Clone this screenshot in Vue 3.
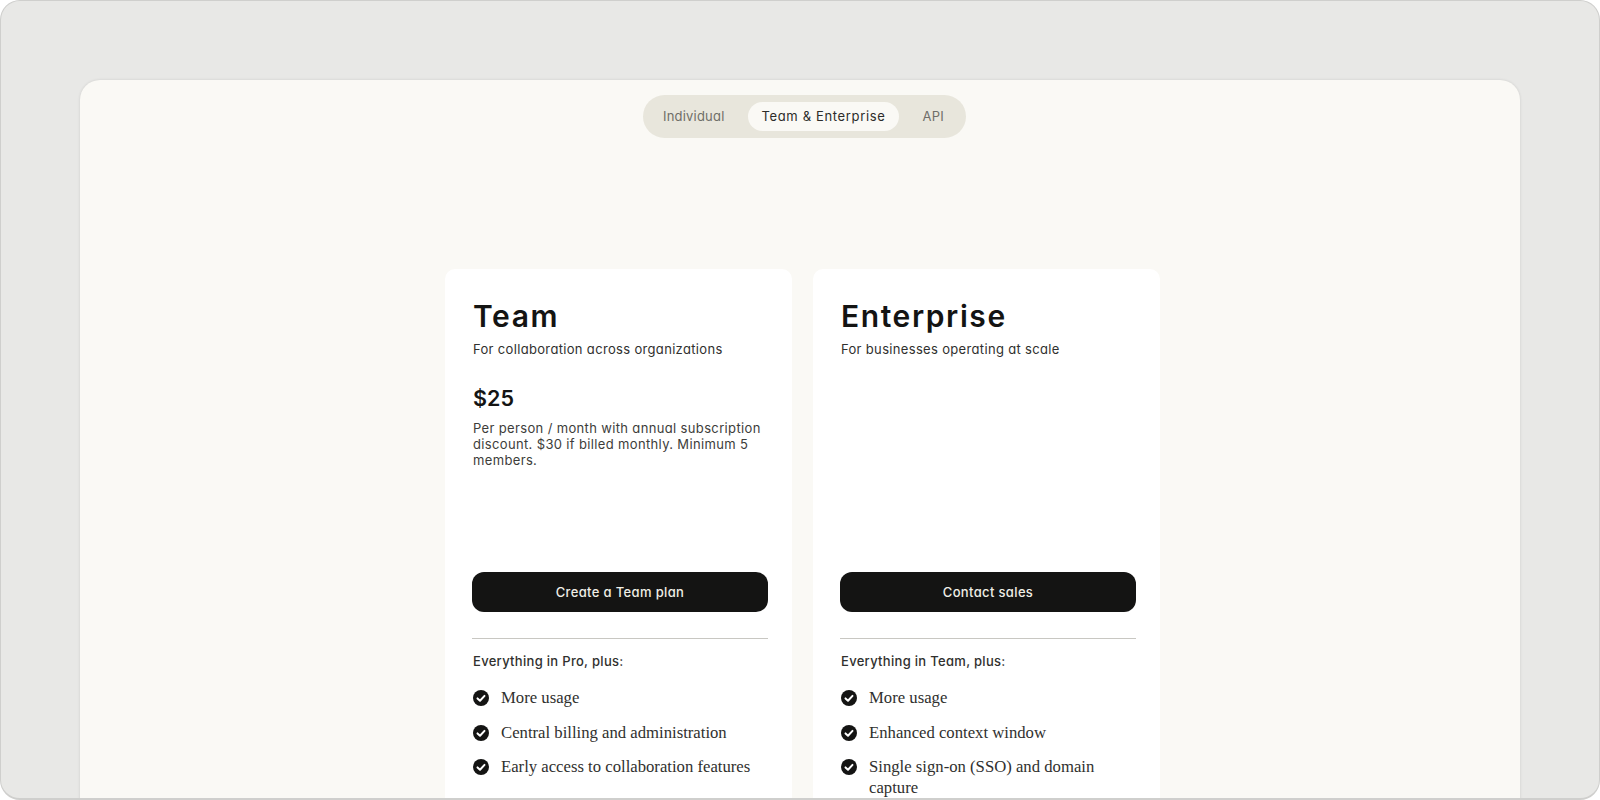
<script setup>
const tabs = [
  { label: 'Individual', active: false },
  { label: 'Team & Enterprise', active: true },
  { label: 'API', active: false },
]
const plans = [
  {
    name: 'Team',
    tagline: 'For collaboration across organizations',
    price: '$25',
    note: 'Per person / month with annual subscription discount. $30 if billed monthly. Minimum 5 members.',
    cta: 'Create a Team plan',
    lead: 'Everything in Pro, plus:',
    features: ['More usage', 'Central billing and administration', 'Early access to collaboration features'],
  },
  {
    name: 'Enterprise',
    tagline: 'For businesses operating at scale',
    price: '',
    note: '',
    cta: 'Contact sales',
    lead: 'Everything in Team, plus:',
    features: ['More usage', 'Enhanced context window', 'Single sign-on (SSO) and domain capture'],
  },
]
</script>

<template>
  <div class="frame">
    <main class="panel">
      <nav class="tabs">
        <span v-for="t in tabs" :key="t.label" class="tab" :class="{ active: t.active }">{{ t.label }}</span>
      </nav>
      <section class="plans">
        <article v-for="p in plans" :key="p.name" class="card">
          <h2 class="name">{{ p.name }}</h2>
          <p class="tagline">{{ p.tagline }}</p>
          <div class="pricing">
            <template v-if="p.price">
              <div class="price">{{ p.price }}</div>
              <p class="note">{{ p.note }}</p>
            </template>
          </div>
          <button class="cta">{{ p.cta }}</button>
          <hr class="rule" />
          <p class="lead">{{ p.lead }}</p>
          <ul class="features">
            <li v-for="f in p.features" :key="f" class="feature">
              <svg class="check" viewBox="0 0 16 16" aria-hidden="true">
                <circle cx="8" cy="8" r="8" fill="#141413" />
                <path d="M4.5 8.4 7 10.7 11.5 5.9" fill="none" stroke="#fff" stroke-width="2" stroke-linecap="round" stroke-linejoin="round" />
              </svg>
              <span class="feature-text">{{ f }}</span>
            </li>
          </ul>
        </article>
      </section>
    </main>
  </div>
</template>

<style>
html, body { margin: 0; background: #fff; }
</style>

<style scoped>
.frame {
  box-sizing: border-box;
  width: 1600px;
  height: 800px;
  padding: 79px 79px 0;
  background: #e8e8e6;
  border: 1px solid #cfcfcd;
  border-bottom-width: 2px;
  border-radius: 20px;
  overflow: hidden;
  font-family: Inter, "Liberation Sans", sans-serif;
  font-feature-settings: "cv11";
  color: #141413;
}
.panel {
  height: 760px;
  padding-top: 15px;
  box-sizing: border-box;
  background: #faf9f5;
  border-radius: 20px 20px 0 0;
  box-shadow: 0 0 3px rgba(0, 0, 0, 0.12);
  overflow: hidden;
}
.tabs {
  display: flex;
  align-items: center;
  gap: 9px;
  width: max-content;
  height: 43px;
  margin-left: 563px;
  padding: 0 8px 0 6px;
  box-sizing: border-box;
  background: #e8e6dc;
  border-radius: 22px;
}
.tab {
  padding: 0 14px;
  height: 29px;
  line-height: 29px;
  font-size: 13px;
  letter-spacing: 0.2px;
  color: #6f6e68;
  border-radius: 15px;
}
.tab.active {
  background: #faf9f5;
  color: #2c2c2a;
  letter-spacing: 0.65px;
}
.plans {
  display: flex;
  gap: 21px;
  margin: 131px 0 0 365px;
}
.card {
  box-sizing: border-box;
  width: 347px;
  height: 600px;
  padding: 29px 24px 0 28px;
  background: #fff;
  border-radius: 10px;
}
.name {
  margin: 0;
  font-size: 30px;
  line-height: 36px;
  font-weight: 600;
  letter-spacing: 1.6px;
  font-feature-settings: normal;
}
.tagline {
  margin: 5px 0 0;
  font-size: 13px;
  line-height: 20px;
  letter-spacing: 0.33px;
  color: #30302e;
}
.pricing {
  height: 191px;
  margin-top: 22px;
}
.price {
  font-size: 21.5px;
  line-height: 34px;
  font-weight: 600;
}
.note {
  margin: 5px 0 0;
  font-size: 13px;
  line-height: 16px;
  letter-spacing: 0.35px;
  color: #3d3d3a;
}
.cta {
  display: block;
  width: 296px;
  height: 40px;
  margin-left: -1px;
  background: #141413;
  color: #f0eee6;
  border: 0;
  border-radius: 12px;
  font: 500 13px Inter, "Liberation Sans", sans-serif;
  font-feature-settings: "cv11";
  letter-spacing: 0.35px;
}
.rule {
  width: 296px;
  margin: 26px 0 0 -1px;
  border: 0;
  border-top: 1px solid #c8c7c2;
}
.lead {
  margin: 13px 0 0;
  font-size: 13px;
  line-height: 18px;
  font-weight: 500;
  letter-spacing: 0.3px;
  color: #30302e;
}
.features {
  list-style: none;
  margin: 17px 0 0;
  padding: 0;
}
.feature {
  display: flex;
  gap: 12px;
  font-family: "Liberation Serif", serif;
  font-size: 16.7px;
  line-height: 21px;
  color: #30302e;
  margin-bottom: 13.5px;
}
.feature-text {
  max-width: 262px;
}
.check {
  flex: none;
  width: 16px;
  height: 16px;
  margin-top: 3px;
}
</style>
